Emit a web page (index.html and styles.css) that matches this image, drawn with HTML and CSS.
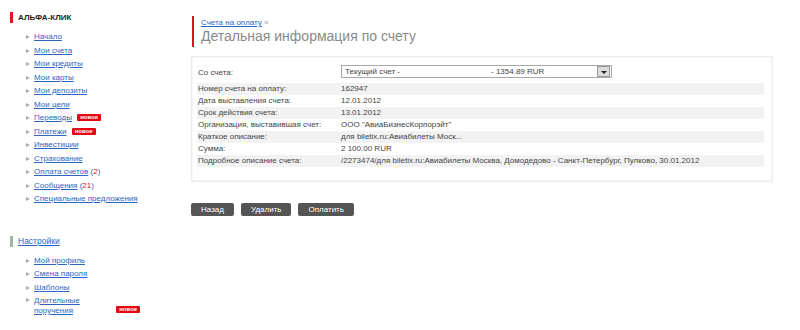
FILE: index.html
```html
<!doctype html>
<html>

<head>
  <meta charset="utf-8">
  <title>Детальная информация по счету</title>
  <link rel="stylesheet" href="styles.css">
</head>

<body>
  <div id="page">

    <div class="sidebar">
      <div class="menu-title">АЛЬФА-КЛИК</div>
      <ul class="menu">
        <li><a href="#">Начало</a></li>
        <li><a href="#">Мои счета</a></li>
        <li><a href="#">Мои кредиты</a></li>
        <li><a href="#">Мои карты</a></li>
        <li><a href="#">Мои депозиты</a></li>
        <li><a href="#">Мои цели</a></li>
        <li><a href="#">Переводы</a> <span class="badge">новое</span></li>
        <li><a href="#">Платежи</a> <span class="badge">новое</span></li>
        <li><a href="#">Инвестиции</a></li>
        <li><a href="#">Страхование</a></li>
        <li><a href="#">Оплата счетов</a> <span class="count">(<b>2</b>)</span></li>
        <li><a href="#">Сообщения</a> <span class="count">(<b>21</b>)</span></li>
        <li><a href="#">Специальные предложения</a></li>
      </ul>

      <div class="menu-title menu-title-settings"><a href="#">Настройки</a></div>
      <ul class="menu">
        <li><a href="#">Мой профиль</a></li>
        <li><a href="#">Смена пароля</a></li>
        <li><a href="#">Шаблоны</a></li>
        <li class="wrap"><a href="#">Длительные поручения</a> <span class="badge">новое</span></li>
      </ul>
    </div>

    <div class="content">
      <div class="heading">
        <div class="crumbs"><a href="#">Счета на оплату</a> <span class="raquo">&raquo;</span></div>
        <h1>Детальная информация по счету</h1>
      </div>

      <div class="panel">
        <div class="row row-select">
          <div class="label">Со счета:</div>
          <div class="value">
            <div class="select">
              <span class="select__name">Текущий счет -</span>
              <span class="select__sum">- 1354.89 RUR</span>
              <span class="select__btn"></span>
            </div>
          </div>
        </div>
        <div class="row odd">
          <div class="label">Номер счета на оплату:</div>
          <div class="value">162947</div>
        </div>
        <div class="row">
          <div class="label">Дата выставления счета:</div>
          <div class="value">12.01.2012</div>
        </div>
        <div class="row odd">
          <div class="label">Срок действия счета:</div>
          <div class="value">13.01.2012</div>
        </div>
        <div class="row">
          <div class="label">Организация, выставившая счет:</div>
          <div class="value">ООО "АвиаБизнесКорпорэйт"</div>
        </div>
        <div class="row odd">
          <div class="label">Краткое описание:</div>
          <div class="value">для biletix.ru:Авиабилеты Моск...</div>
        </div>
        <div class="row">
          <div class="label">Сумма:</div>
          <div class="value">2 100.00 RUR</div>
        </div>
        <div class="row odd">
          <div class="label">Подробное описание счета:</div>
          <div class="value">/2273474/для biletix.ru:Авиабилеты Москва, Домодедово - Санкт-Петербург, Пулково, 30.01.2012</div>
        </div>
      </div>

      <div class="buttons">
        <button class="btn">Назад</button>
        <button class="btn">Удалить</button>
        <button class="btn">Оплатить</button>
      </div>
    </div>

  </div>
</body>

</html>
```

FILE: styles.css
```css
* {
  margin: 0;
  padding: 0;
  box-sizing: border-box;
}

body {
  background: #fff;
  font-family: "Liberation Sans", Arial, sans-serif;
  font-size: 8px;
  color: #333;
}

a {
  color: #2b66c0;
}

#page {
  display: flex;
  width: 800px;
  height: 330px;
}

/* left menu */

.sidebar {
  width: 191px;
  flex: none;
  padding: 12px 0 0 10px;
}

.menu-title {
  border-left: 3px solid #e0141e;
  padding-left: 5px;
  height: 11px;
  line-height: 11px;
  font-size: 8px;
  font-weight: bold;
  color: #222;
}

.menu-title-settings {
  margin-top: 30px;
  border-left-color: #9fb7a4;
  font-size: 8.5px;
  font-weight: normal;
}

.menu {
  list-style: none;
  margin: 7px 0 0 16px;
}

.menu li {
  position: relative;
  padding-left: 8px;
  height: 13.5px;
  line-height: 13.5px;
}

.menu li:before {
  content: "";
  position: absolute;
  left: 0;
  top: 5px;
  border-left: 4px solid #aaa;
  border-top: 2px solid transparent;
  border-bottom: 2px solid transparent;
}

.menu li.wrap {
  height: auto;
  line-height: 10px;
  padding-top: 2px;
}

.menu li.wrap:before {
  top: 4px;
}

.menu li.wrap a {
  display: inline-block;
  width: 60px;
  vertical-align: bottom;
}

.menu li.wrap .badge {
  margin-left: 20px;
  vertical-align: 2px;
}

.badge {
  display: inline-block;
  background: #e30613;
  color: #fff;
  font-size: 6px;
  font-weight: bold;
  line-height: 7px;
  padding: 0 3px;
  border-radius: 1px;
  margin-left: 3px;
  vertical-align: 1px;
}

.count {
  color: #2b66c0;
}

.count b {
  font-weight: normal;
  color: #e30613;
}

/* content */

.content {
  flex: 1;
  padding-top: 16px;
}

.heading {
  margin-left: 1px;
  border-left: 2px solid #d9141e;
  padding-left: 7px;
  height: 31px;
}

.crumbs {
  font-size: 8px;
  line-height: 11px;
  padding-top: 1px;
}

.raquo {
  color: #999;
}

h1 {
  font-size: 14px;
  font-weight: normal;
  color: #8a8a8a;
  line-height: 17px;
}

.panel {
  width: 582px;
  margin-top: 9px;
  border: 1px solid #ececec;
  box-shadow: inset 0 0 0 1px #f7f7f7;
  padding: 8px 8px 14px 5px;
}

.row {
  display: flex;
  height: 12px;
  line-height: 12px;
  color: #444;
}

.row.odd {
  background: #f2f2f2;
}

.row-select {
  height: 15px;
  line-height: 15px;
  margin-bottom: 3px;
}

.label {
  width: 144px;
  padding-left: 1px;
}

.select {
  position: relative;
  display: flex;
  width: 271px;
  height: 13px;
  line-height: 11px;
  border: 1px solid #a9a9a9;
  background: #fff;
  padding-left: 3px;
}

.select__name {
  width: 146px;
}

.select__btn {
  position: absolute;
  right: 1px;
  top: 0;
  width: 13px;
  height: 11px;
  background: #dcdcdc;
  border: 1px solid #999;
}

.select__btn:after {
  content: "";
  position: absolute;
  left: 3px;
  top: 4px;
  border-top: 3px solid #222;
  border-left: 3px solid transparent;
  border-right: 3px solid transparent;
}

.buttons {
  display: flex;
  gap: 7px;
  margin-top: 21px;
}

.btn {
  height: 13px;
  padding: 0 10px;
  border: none;
  border-radius: 2px;
  background: #555;
  color: #fff;
  font-family: "Liberation Sans", Arial, sans-serif;
  font-size: 8px;
}
```
